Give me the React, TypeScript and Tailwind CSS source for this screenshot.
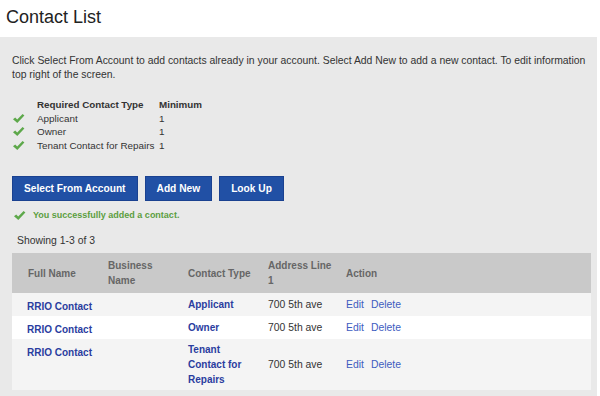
import React from 'react';

const Check = () => (
  <svg width="13" height="11" viewBox="0 0 13 11" className="shrink-0">
    <path d="M1 6.2 L3.2 4.4 L5.2 6.6 L10.6 1 L12.4 2.6 L5.3 10 Z" fill="#5da84a" />
  </svg>
);

const requirements = [
  { type: 'Applicant', min: 1 },
  { type: 'Owner', min: 1 },
  { type: 'Tenant Contact for Repairs', min: 1 },
];

const contacts = [
  { name: 'RRIO Contact', business: '', type: 'Applicant', address: '700 5th ave', tall: false },
  { name: 'RRIO Contact', business: '', type: 'Owner', address: '700 5th ave', tall: false },
  { name: 'RRIO Contact', business: '', type: 'Tenant Contact for Repairs', address: '700 5th ave', tall: true },
];

export default function App() {
  return (
    <div className="w-[600px] h-[396px] overflow-hidden bg-white text-[#333] font-['Liberation_Sans',Arial,sans-serif]">
      <h1 className="h-[37px] pl-[6px] pt-[6px] text-[18px] leading-[22px] text-[#222]">Contact List</h1>

      <div className="w-[597px] h-[359px] bg-[#e9e9e9] pl-[12px] pr-[6px] pt-[17px]">
        <p className="text-[10.4px] leading-[13.5px] text-[#333]">
          Click Select From Account to add contacts already in your account. Select Add New to add a new contact. To edit information top right of the screen.
        </p>

        {/* Required contact types */}
        <table className="mt-[17px] text-[9.9px] leading-[13.5px] border-collapse">
          <thead>
            <tr>
              <th className="w-[25px]"></th>
              <th className="w-[122px] text-left font-bold text-[9.8px] whitespace-nowrap">Required Contact Type</th>
              <th className="text-left font-bold text-[9.8px]">Minimum</th>
            </tr>
          </thead>
          <tbody>
            {requirements.map(r => (
              <tr key={r.type}>
                <td className="align-middle"><Check /></td>
                <td className="whitespace-nowrap pr-[2px]">{r.type}</td>
                <td>{r.min}</td>
              </tr>
            ))}
          </tbody>
        </table>

        <div className="mt-[24px] flex gap-[7px]">
          <button className="h-[25px] px-[11px] bg-[#2150a5] border border-[#1a4190] text-white font-bold text-[10.2px]">Select From Account</button>
          <button className="h-[25px] px-[11px] bg-[#2150a5] border border-[#1a4190] text-white font-bold text-[10.2px]">Add New</button>
          <button className="h-[25px] px-[11px] bg-[#2150a5] border border-[#1a4190] text-white font-bold text-[10.2px]">Look Up</button>
        </div>

        <div className="mt-[8px] flex items-center gap-[7px] pl-[1px] h-[13px]">
          <Check />
          <span className="text-[9px] font-bold text-[#5b9e3f]">You successfully added a contact.</span>
        </div>

        <div className="mt-[12px] pl-[5px] text-[10.4px] leading-[13px]">Showing 1-3 of 3</div>

        {/* Contacts */}
        <table className="mt-[6px] w-[579px] table-fixed border-collapse text-[10px]">
          <colgroup>
            <col className="w-[80px]" />
            <col className="w-[80px]" />
            <col className="w-[80px]" />
            <col className="w-[78px]" />
            <col />
          </colgroup>
          <thead>
            <tr className="bg-[#c9c9c9] text-[#666] h-[40px]">
              <th className="pl-4 text-left font-bold align-middle whitespace-nowrap">Full Name</th>
              <th className="pl-4 text-left font-bold align-middle leading-[15.5px]">Business<br />Name</th>
              <th className="pl-4 text-left font-bold align-middle whitespace-nowrap">Contact Type</th>
              <th className="pl-4 text-left font-bold align-middle leading-[15.5px] whitespace-nowrap">Address Line<br />1</th>
              <th className="pl-4 text-left font-bold align-middle">Action</th>
            </tr>
          </thead>
          <tbody>
            {contacts.map((c, i) => (
              <tr key={i} className={i % 2 === 1 ? 'bg-white' : 'bg-[#f4f4f4]'}>
                <td className="pl-[15px] pt-[6px] pb-[2px] leading-[15px] align-top font-bold text-[#2a3d9f] whitespace-nowrap">{c.name}</td>
                <td className="pl-4">{c.business}</td>
                <td className="pl-4 py-[3px] leading-[15px] font-bold text-[#2a3d9f] align-middle whitespace-nowrap">
                  {c.tall ? (<>Tenant<br />Contact for<br />Repairs</>) : c.type}
                </td>
                <td className="pl-4 align-middle text-[#333] text-[10.4px] whitespace-nowrap">{c.address}</td>
                <td className="pl-4 align-middle text-[#3d5cbf] text-[10.4px] whitespace-nowrap">
                  <span>Edit</span>
                  <span className="ml-[7px]">Delete</span>
                </td>
              </tr>
            ))}
          </tbody>
        </table>
      </div>
    </div>
  );
}
